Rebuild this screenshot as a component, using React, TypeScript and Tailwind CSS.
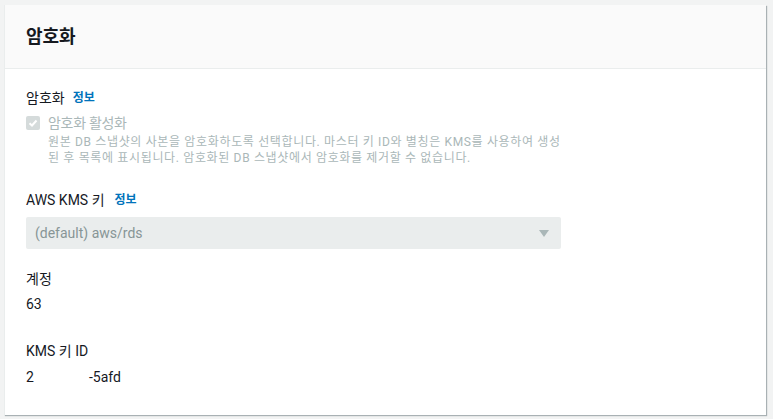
export default function App() {
  return (
    <div
      className="min-h-screen w-[773px] h-[419px] bg-[#f2f3f3] pt-[5px] pl-[4px] overflow-hidden"
      style={{ fontFamily: 'Roboto, "Noto Sans CJK KR", sans-serif' }}
    >
      <div className="w-[762px] h-[410px] bg-white border-l border-[#eaeded] shadow-[1px_1px_1px_0_rgba(0,28,36,0.3)]">
        <div className="h-[64px] bg-[#fafafa] border-b border-[#eaeded] px-[21px] flex items-center">
          <h2 className="text-[18px] font-bold text-[#16191f] leading-none">암호화</h2>
        </div>
        <div className="px-[21px] pt-[18px] text-[14px] text-[#16191f]">
          <div className="flex items-center gap-[8px] leading-[22px]">
            <span>암호화</span>
            <span className="text-[#0073bb] font-bold text-[12px]">정보</span>
          </div>
          <div className="mt-[3px] flex gap-[8px]">
            <div className="w-[14px] h-[14px] mt-[4px] rounded-[2px] bg-[#d5dbdb] flex items-center justify-center shrink-0">
              <svg width="10" height="10" viewBox="0 0 10 10">
                <path d="M1.5 5.2 L4 7.5 L8.5 2.5" fill="none" stroke="white" strokeWidth="2" />
              </svg>
            </div>
            <div>
              <div className="text-[#aab7b8] leading-[22px] tracking-[-0.3px]">암호화 활성화</div>
              <div className="text-[#aab7b8] text-[12px] leading-[16px] tracking-[0.65px] whitespace-nowrap">
                원본 DB 스냅샷의 사본을 암호화하도록 선택합니다. 마스터 키 ID와 별칭은 KMS를 사용하여 생성
                <br />
                된 후 목록에 표시됩니다. 암호화된 DB 스냅샷에서 암호화를 제거할 수 없습니다.
              </div>
            </div>
          </div>
          <div className="mt-[23px] flex items-center gap-[10px] leading-[22px]">
            <span>AWS KMS 키</span>
            <span className="text-[#0073bb] font-bold text-[12px]">정보</span>
          </div>
          <div className="mt-[6px] w-[535px] h-[32px] bg-[#eaeded] rounded-[2px] flex items-center justify-between pl-[9px] pr-[12px]">
            <span className="text-[#879596]">(default) aws/rds</span>
            <svg width="10" height="7" viewBox="0 0 10 7">
              <path d="M0 0 H10 L5 7 Z" fill="#aab7b8" />
            </svg>
          </div>
          <div className="mt-[19px] leading-[22px]">계정</div>
          <div className="mt-[3px] leading-[22px]">63</div>
          <div className="mt-[25px] leading-[22px]">KMS 키 ID</div>
          <div className="mt-[4px] leading-[22px] flex">
            <span className="w-[63px]">2</span>
            <span>-5afd</span>
          </div>
        </div>
      </div>
    </div>
  );
}
